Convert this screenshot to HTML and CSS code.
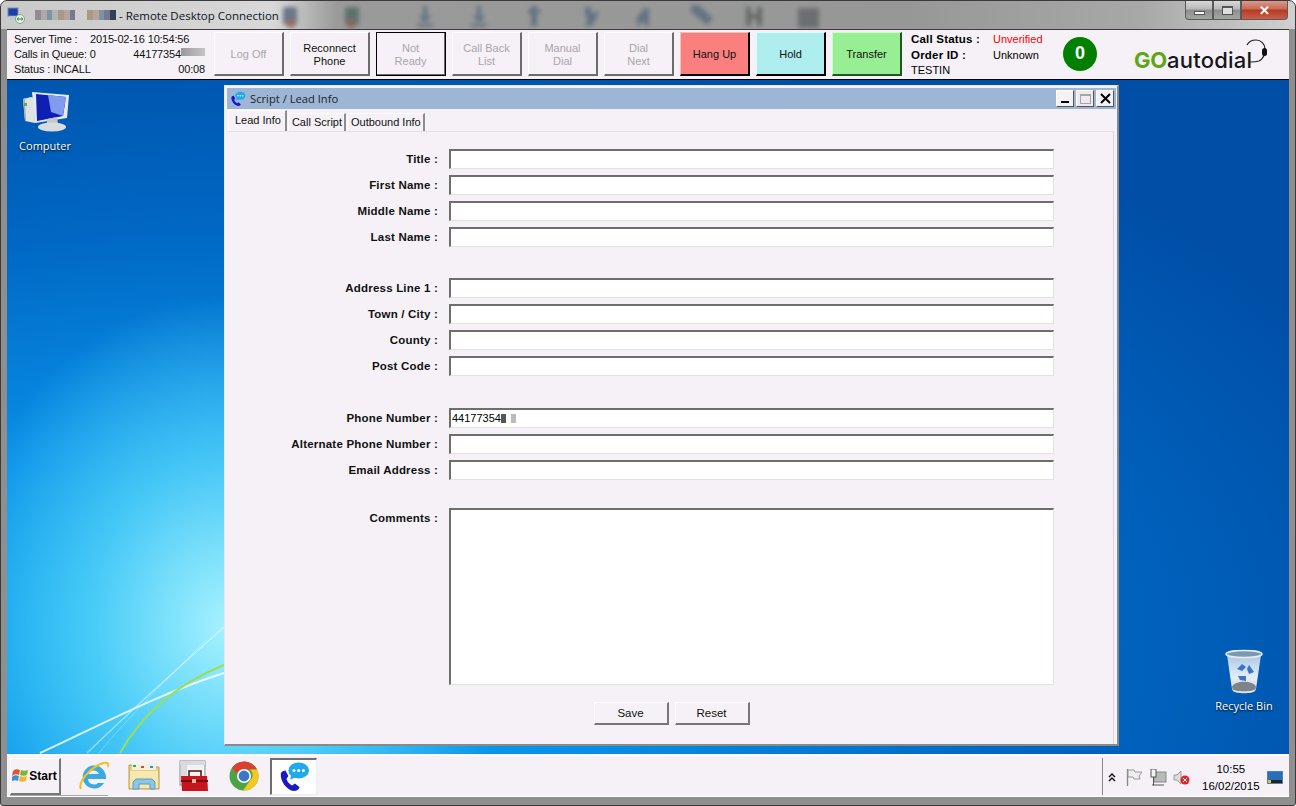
FILE: index.html
```html
<!DOCTYPE html>
<html lang="en">
<head>
    <meta charset="UTF-8">
    <title>Remote Desktop Connection</title>
    <link rel="stylesheet" href="styles.css">
</head>
<body>
    <div class="rdp">
        <div class="rdp-title">
            <svg class="rdp-icon" width="18" height="18" viewBox="0 0 18 18">
                <rect x="1" y="2" width="10" height="8" fill="#1c3fae" stroke="#7d8aa5"/>
                <rect x="3" y="10" width="7" height="3" fill="#b8c2d2"/>
                <circle cx="13" cy="13" r="4.5" fill="#e8efe6" stroke="#8aa08a"/>
                <path d="M10.5 13h5M12 11.5l-2 1.5 2 1.5M14 11.5l2 1.5-2 1.5" stroke="#2f9a3a" fill="none"/>
            </svg>
            <div class="blur-name">
                <i class="c1"></i><i class="c2"></i><i class="c3"></i><i class="c4"></i><i class="c5"></i><i class="c6"></i><i class="c7"></i><i class="c0"></i><i class="c0"></i><i class="c5"></i><i class="c6"></i><i class="c3"></i><i class="c7"></i><i class="c8"></i>
            </div>
            <span class="rdp-title-text">- Remote Desktop Connection</span>
            <div class="blur-tools">
                <svg width="560" height="29" viewBox="0 0 560 29">
                    <g fill="#586a7d">
                        <rect x="2" y="6" width="14" height="18" rx="3" fill="#53647a"/>
                        <circle cx="10" cy="22" r="5" fill="#8a5a55"/>
                        <rect x="64" y="6" width="14" height="18" rx="3" fill="#4c6a60"/>
                        <circle cx="70" cy="22" r="5" fill="#7d5c55"/>
                        <path d="M142 5h4v10h5l-7 7-7-7h5zM136 23h16v3h-16z"/>
                        <path d="M196 5h4v10h5l-7 7-7-7h5zM190 23h16v3h-16z"/>
                        <path d="M253 4l8 8h-5v13h-6v-13h-5z"/>
                        <path d="M304 6h6v6l8-2-4 10-4 5h-6l3-8-3-2z"/>
                        <path d="M356 16l9-10 3 3v16h-4v-5l-8 5z"/>
                        <path d="M410 5l7-1 15 13-6 7-16-13z"/>
                        <path d="M465 6h5v7h6V6h5v19h-5v-7h-6v7h-5z" fill="#5d6060"/>
                        <rect x="517" y="7" width="21" height="20" fill="#626566"/>
                    </g>
                </svg>
            </div>
            <div class="rdp-controls">
                <button class="ctl"><span class="glyph-min"></span></button>
                <button class="ctl"><span class="glyph-max"></span></button>
                <button class="ctl ctl-close">&#10005;</button>
            </div>
        </div>

        <div class="screen">
            <div class="toolbar">
                <div class="info">
                    <div class="info-row"><span class="info-label">Server Time :</span><span>2015-02-16 10:54:56</span></div>
                    <div class="info-row"><span>Calls in Queue: 0</span><span class="info-phone">44177354<i class="smudge"></i></span></div>
                    <div class="info-row"><span>Status : INCALL</span><span>00:08</span></div>
                </div>
                <div class="buttons">
                    <button class="btn" disabled>Log Off</button>
                    <button class="btn btn-wide">Reconnect<br>Phone</button>
                    <button class="btn btn-focus" disabled>Not<br>Ready</button>
                    <button class="btn" disabled>Call Back<br>List</button>
                    <button class="btn" disabled>Manual<br>Dial</button>
                    <button class="btn" disabled>Dial<br>Next</button>
                    <button class="btn btn-red">Hang Up</button>
                    <button class="btn btn-cyan">Hold</button>
                    <button class="btn btn-green">Transfer</button>
                </div>
                <div class="status">
                    <b>Call Status :</b><span class="red">Unverified</span>
                    <b>Order ID :</b><span>Unknown</span>
                    <span>TESTIN</span>
                </div>
                <div class="counter">0</div>
                <div class="logo">
                    <span class="logo-go">GO</span><span class="logo-auto">autodial</span>
                    <svg class="logo-head" width="24" height="26" viewBox="0 0 24 26">
                        <path d="M2 6C4 2 8 1 11 1c5 0 9 4 9 9 0 5-2 10-6 12-3 1-6 1-9 1" fill="none" stroke="#222" stroke-width="1.200"/>
                        <rect x="17" y="9" width="5" height="8" rx="2.500" fill="#111"/>
                    </svg>
                </div>
            </div>

            <div class="desktop">
                <svg class="streaks" width="230" height="200" viewBox="0 0 230 200">
                    <path d="M33 199C80 178 150 140 217 119" fill="none" stroke="#fff" stroke-width="2" opacity=".8"/>
                    <path d="M80 199C110 170 170 115 217 73" fill="none" stroke="#e8fbff" stroke-width="1.200" opacity=".55"/>
                    <path d="M92 199C115 170 165 120 200 85" fill="none" stroke="#e8fbff" stroke-width="1" opacity=".3"/>
                    <path d="M113 199C135 160 170 130 217 111" fill="none" stroke="#9ade5a" stroke-width="2"/>
                </svg>
                <div class="desk-icon desk-computer">
                    <svg class="computer-art" width="55" height="50" viewBox="0 0 55 50">
                        <path d="M3 14l8-2 3 1 1 25-10-2z" fill="#dfe3e4"/>
                        <path d="M3 14l2-1 1 23-1 0z" fill="#aab0b3"/>
                        <rect x="4" y="18" width="3" height="3" fill="#58b04a"/>
                        <path d="M12 7l37 3-2 23-32 5z" fill="#e6eaee"/>
                        <path d="M16 9l30 3-3 19-26 5z" fill="#0f1fb4"/>
                        <path d="M28 10l18 2-3 19-12-4z" fill="#7f9cf0"/>
                        <path d="M27 34l10-2 1 7H27z" fill="#c3c8cb"/>
                        <ellipse cx="32" cy="42" rx="14" ry="4.5" fill="#d9dcde"/>
                    </svg>
                    <span>Computer</span>
                </div>
                <div class="desk-icon desk-bin">
                    <svg width="40" height="48" viewBox="0 0 40 48">
                        <defs>
                            <linearGradient id="binGlass" x1="0" y1="0" x2="0" y2="1">
                                <stop offset="0" stop-color="#a9c8e6"/>
                                <stop offset=".6" stop-color="#e3eef6"/>
                                <stop offset="1" stop-color="#cfd6da"/>
                            </linearGradient>
                        </defs>
                        <path d="M3 7l5 34c1 4 23 4 24 0l5-34c-3 4-31 4-34 0z" fill="url(#binGlass)"/>
                        <ellipse cx="20" cy="6" rx="18" ry="3.5" fill="#7b98b2" stroke="#e9eef2" stroke-width="1.5"/>
                        <path d="M8 39c2-7 22-7 24 0l-1 3c-2 4-20 4-22 0z" fill="#7e8488"/>
                        <path d="M8 41c3 3 21 3 24 0l-1 2c-2 3-20 3-22 0z" fill="#dfe2e4"/>
                        <path d="M13 21l5-5 4 3-4 4zM25 17l5 7-5 2-2-5zM14 28l8 0 0 5-6-1z" fill="#3a74c9"/>
                    </svg>
                    <span>Recycle Bin</span>
                </div>

                <div class="win">
                    <div class="win-title">
                        <svg class="phone-icon" width="16" height="16" viewBox="0 0 34 34">
                            <path d="M3 13c1-2 3-3 5-3l3 6-2 3c1 3 3 5 6 7l3-2 5 4c-1 3-4 4-6 4C9 31 2 21 3 13z" fill="#1a1ac4"/>
                            <ellipse cx="22" cy="10" rx="11" ry="8.5" fill="#1fa9ee"/>
                            <path d="M14 15l-1 5 6-3z" fill="#1fa9ee"/>
                            <circle cx="17" cy="10" r="1.6" fill="#fff"/><circle cx="22" cy="10" r="1.6" fill="#fff"/><circle cx="27" cy="10" r="1.6" fill="#fff"/>
                        </svg>
                        <span class="win-title-text">Script / Lead Info</span>
                        <div class="win-ctls">
                            <button class="wbtn"><span class="wmin"></span></button>
                            <button class="wbtn wbtn-off"><span class="wmax"></span></button>
                            <button class="wbtn"><svg width="11" height="11" viewBox="0 0 11 11"><path d="M1 1l9 9M10 1l-9 9" stroke="#000" stroke-width="2"/></svg></button>
                        </div>
                    </div>
                    <div class="tabs">
                        <span class="tab tab-on">Lead Info</span>
                        <span class="tab">Call Script</span>
                        <span class="tab">Outbound Info</span>
                    </div>
                    <div class="panel">
                        <div class="group">
                            <label>Title :</label><input type="text">
                            <label>First Name :</label><input type="text">
                            <label>Middle Name :</label><input type="text">
                            <label>Last Name :</label><input type="text">
                        </div>
                        <div class="group group-address">
                            <label>Address Line 1 :</label><input type="text">
                            <label>Town / City :</label><input type="text">
                            <label>County :</label><input type="text">
                            <label>Post Code :</label><input type="text">
                        </div>
                        <div class="group group-phone">
                            <label>Phone Number :</label><div class="field">44177354<i class="smudge-a"></i><i class="smudge-b"></i></div>
                            <label>Alternate Phone Number :</label><input type="text">
                            <label>Email Address :</label><input type="text">
                        </div>
                        <div class="group group-comments">
                            <label>Comments :</label><textarea></textarea>
                        </div>
                        <div class="actions">
                            <button class="act">Save</button>
                            <button class="act">Reset</button>
                        </div>
                    </div>
                </div>
            </div>

            <div class="taskbar">
                <button class="start">
                    <svg width="17" height="15" viewBox="0 0 17 15">
                        <path d="M1 3c2-2 4-2 7-1l-1 5c-2-1-5-1-7 1z" fill="#e4572e"/>
                        <path d="M9 2c2 1 5 1 7 0l-1 5c-2 1-5 1-7 0z" fill="#7fb33a"/>
                        <path d="M0 9c2-2 4-2 7-1l-1 5c-2-1-5-1-7 1z" fill="#3f8fd8"/>
                        <path d="M8 8c2 1 5 1 7 0l-1 5c-2 1-5 1-7 0z" fill="#f2b632"/>
                    </svg>
                    <b>Start</b>
                </button>
                <div class="apps">
                    <div class="app">
                        <svg width="32" height="32" viewBox="0 0 32 32">
                            <path d="M27 13a11.500 11.500 0 1 0-1 10h-6a6 6 0 0 1-10-4h18c0-2 0-4-1-6zM10 14a6 6 0 0 1 11 0z" fill="#3aa9e4"/>
                            <path d="M3 29C0 24 9 9 25 3c4-1 6 0 5 4" fill="none" stroke="#f2c21b" stroke-width="2"/>
                        </svg>
                    </div>
                    <div class="app">
                        <svg width="32" height="30" viewBox="0 0 32 30">
                            <path d="M1 4h12l2 2h16v22H1z" fill="#e9cf7d" stroke="#b99c52"/>
                            <rect x="4" y="3" width="24" height="6" fill="#f4f0e0"/>
                            <rect x="5" y="4" width="3" height="2" fill="#2fb344"/><rect x="13" y="5" width="3" height="2" fill="#d9452f"/><rect x="22" y="5" width="3" height="2" fill="#2f8fe0"/>
                            <rect x="2" y="10" width="28" height="17" fill="#f8e8ae"/>
                            <path d="M5 28v-7l3-3h16l3 3v7h-5v-5H11v5z" fill="#8cc6e6" stroke="#5b9cc4"/>
                        </svg>
                    </div>
                    <div class="app">
                        <svg width="30" height="32" viewBox="0 0 30 32">
                            <rect x="1" y="1" width="25" height="24" fill="#f2f2f2" stroke="#8d8d96"/>
                            <rect x="1" y="1" width="25" height="4" fill="#d8dae0"/>
                            <rect x="2" y="5" width="6" height="16" fill="#dcdcdc"/>
                            <path d="M10 16v-5h12v5" fill="none" stroke="#4d1010" stroke-width="1.5"/>
                            <path d="M2 16h26l1 15H3z" fill="#c4161c"/>
                            <rect x="2" y="20" width="27" height="2" fill="#7d0a0f"/>
                            <rect x="13" y="19" width="4" height="4" fill="#e7b9a0"/>
                        </svg>
                    </div>
                    <div class="app">
                        <svg width="30" height="30" viewBox="0 0 30 30">
                            <circle cx="15" cy="15" r="14.500" fill="#4ea246"/>
                            <path d="M3 7A14.500 14.500 0 0 1 28 8.500H15a7 7 0 0 0-7 4z" fill="#dc3e2f"/>
                            <path d="M28 8.500A14.500 14.500 0 0 1 14 29.500l7-10a7 7 0 0 0 0-11z" fill="#f4c91f"/>
                            <circle cx="15" cy="15" r="7" fill="#fff"/>
                            <circle cx="15" cy="15" r="5.400" fill="#3b78c4"/>
                        </svg>
                    </div>
                    <div class="app app-on">
                        <svg width="34" height="32" viewBox="0 0 34 34">
                            <path d="M3 13c1-2 3-3 5-3l3 6-2 3c1 3 3 5 6 7l3-2 5 4c-1 3-4 4-6 4C9 31 2 21 3 13z" fill="#1a1ac4"/>
                            <ellipse cx="22" cy="10" rx="11" ry="8.500" fill="#1fa9ee"/>
                            <path d="M14 15l-1 5 6-3z" fill="#1fa9ee"/>
                            <circle cx="17" cy="10" r="1.600" fill="#fff"/><circle cx="22" cy="10" r="1.600" fill="#fff"/><circle cx="27" cy="10" r="1.600" fill="#fff"/>
                        </svg>
                    </div>
                </div>
                <div class="tray">
                    <svg class="tray-up" width="8" height="10" viewBox="0 0 8 10"><path d="M1 4l3-3 3 3M1 8l3-3 3 3" fill="none" stroke="#000" stroke-width="1.4"/></svg>
                    <svg width="18" height="17" viewBox="0 0 18 17"><path d="M2.500 0v17" stroke="#888" stroke-width="1.400"/><path d="M3 1h6l1 2h7l-3 4 1 3H9L8 8H3z" fill="#eee" stroke="#999"/></svg>
                    <svg width="18" height="17" viewBox="0 0 18 17"><rect x="5" y="3" width="12" height="10" fill="#b9b9b9" stroke="#888"/><rect x="2" y="0" width="5" height="8" fill="#f3f3f3" stroke="#555"/><path d="M4.500 8v8M3 16h12" stroke="#555"/></svg>
                    <svg width="18" height="15" viewBox="0 0 18 15"><path d="M1 5h3l4-4v13l-4-4H1z" fill="#ddd" stroke="#999"/><circle cx="12" cy="10" r="4.500" fill="#e3242b"/><path d="M10 8l4 4M14 8l-4 4" stroke="#fff"/></svg>
                    <div class="clock"><span>10:55</span><span>16/02/2015</span></div>
                    <svg class="tray-screen" width="16" height="13" viewBox="0 0 16 13"><rect width="16" height="13" fill="#2a6fb5" stroke="#6f93b8"/><rect x="4" y="9" width="11" height="3" fill="#222"/><rect x="1" y="9" width="3" height="3" fill="#e8c12a"/></svg>
                </div>
            </div>
        </div>
    </div>
</body>
</html>
```

FILE: styles.css
```css
* { box-sizing: border-box; }
html, body { margin: 0; padding: 0; height: 100%; }
body {
    background: #fff;
    font-family: "Liberation Sans", Arial, sans-serif;
    font-size: 12px;
    color: #000;
    overflow: hidden;
}
button { font-family: inherit; }

/* outer remote desktop window */
.rdp {
    width: 1296px;
    height: 806px;
    display: flex;
    flex-direction: column;
    padding: 0 6px 8px;
    background: #8f8f8f;
    border: 1px solid #3a3a3a;
    border-radius: 7px 7px 3px 3px;
}
.rdp-title {
    height: 28px;
    flex: none;
    display: flex;
    align-items: center;
    position: relative;
    background: linear-gradient(90deg, #c9c9c9 0, #d8d8d8 21%, #9a9a9a 26%, #979797 70%, #a8a8a8 88%, #d0d0d0 100%);
    margin: 0 -6px;
    padding-left: 6px;
    border-radius: 6px 6px 0 0;
}
.rdp-icon { flex: none; margin-right: 10px; }
.blur-name { display: flex; width: 81px; margin-right: 3px; height: 10px; }
.blur-name i { flex: 1; }
.c0 { background: #cfcfcf; }
.c1 { background: #8f8c92; }
.c2 { background: #b3a6a8; }
.c3 { background: #7d95a2; }
.c4 { background: #b0b5b4; }
.c5 { background: #a89a85; }
.c6 { background: #b3a59c; }
.c7 { background: #76788f; }
.c8 { background: #34405a; }
.rdp-title-text { font-family: "Open Sans", sans-serif; font-size: 11.5px; color: #0d1420; position: relative; z-index: 1; }
.blur-tools {
    position: absolute;
    left: 280px;
    top: 0;
    filter: blur(2px);
    opacity: .8;
}
.rdp-controls { position: absolute; right: 7px; top: 0; display: flex; }
.ctl {
    width: 28px;
    height: 19px;
    border: 1px solid #5a5a5a;
    border-top: 0;
    padding: 0;
    background: linear-gradient(#d8d8d8, #b8b8b8 45%, #8d8d8d 50%, #a5a5a5);
    display: flex;
    align-items: center;
    justify-content: center;
}
.ctl:first-child { border-radius: 0 0 0 4px; }
.ctl-close {
    width: 47px;
    background: linear-gradient(#d99a8c, #c66a55 45%, #b53a22 50%, #c9604a);
    border-radius: 0 0 4px 0;
    color: #fff;
    font-size: 13px;
    font-weight: bold;
}
.glyph-min { display: block; width: 11px; height: 4px; margin-top: 5px; background: #fff; border: 1px solid #555; }
.glyph-max { display: block; width: 11px; height: 9px; background: #ddd; border: 1px solid #555; border-top-width: 2px; }

.screen {
    flex: 1;
    display: flex;
    flex-direction: column;
    border-top: 1px solid #3a3a3a;
}

/* agent toolbar */
.toolbar {
    height: 50px;
    flex: none;
    display: flex;
    background: #f5f1f6;
    border-bottom: 1px solid #000;
    position: relative;
}
.info {
    width: 198px;
    flex: none;
    padding: 2px 0 0 7px;
    line-height: 15px;
    font-size: 11px;
    letter-spacing: -.15px;
    color: #111;
}
.info-row { display: flex; justify-content: space-between; }
.info-label { width: 76px; }
.info-row:first-child { justify-content: flex-start; }
.smudge { display: inline-block; width: 24px; height: 8px; background: linear-gradient(90deg, #999, #c5c5c5); vertical-align: 2px; }
.buttons { display: flex; gap: 6px; padding-top: 2px; margin-left: 9px; }
.btn {
    width: 70px;
    height: 44px;
    padding: 2px 0 0;
    font-size: 11px;
    line-height: 13px;
    color: #111;
    background: #f5f1f6;
    border: 1px solid;
    border-color: #fff #6c6c6c #6c6c6c #fff;
    border-width: 1px 2px 2px 1px;
}
.btn-wide { width: 80px; }
.btn:disabled { color: #a9a6aa; }
.btn-focus { outline: 1px solid #000; outline-offset: -1px; }
.btn-red { background: #fa8080; border-color: #fbb #000 #000 #fbb; }
.btn-cyan { background: #aeeeee; border-color: #dff #000 #000 #dff; }
.btn-green { background: #98ee92; border-color: #cfc #225522 #225522 #cfc; }
.status {
    margin-left: 9px;
    width: 146px;
    flex: none;
    display: grid;
    grid-template-columns: 82px 1fr;
    padding-top: 2px;
    line-height: 15px;
    font-size: 11px;
}
.status b { font-size: 11.5px; letter-spacing: .2px; }
.red { color: #f00; }
.counter {
    width: 34px;
    height: 34px;
    margin: 7px 0 0 6px;
    border-radius: 50%;
    background: #008000;
    color: #fff;
    font-size: 18px;
    font-weight: bold;
    text-align: center;
    line-height: 32px;
    flex: none;
}
.logo {
    position: absolute;
    left: 1127px;
    top: 15px;
    display: flex;
    font-family: Inter, sans-serif;
    font-size: 22px;
    line-height: 30px;
}
.logo-go { color: #5ea51b; font-weight: 700; letter-spacing: -.2px; }
.logo-auto { color: #16161a; font-weight: 500; letter-spacing: .2px; }
.logo-head { position: absolute; left: 111px; top: -6px; }

/* wallpaper and icons */
.desktop {
    flex: 1;
    position: relative;
    overflow: hidden;
    background:
        radial-gradient(ellipse 280px 330px at 223px 545px, #a8f2ff 0, rgba(90, 215, 250, .75) 50%, rgba(60, 200, 250, 0) 100%),
        radial-gradient(ellipse 1250px 640px at 223px 560px, #10b0f2 0, #0890e8 32%, #0068c4 64%, #004ea6 100%);
}
.streaks { position: absolute; left: 0; bottom: 0; }
.desk-icon {
    position: absolute;
    display: flex;
    flex-direction: column;
    align-items: center;
    color: #fff;
    font-family: "Open Sans", sans-serif;
    font-size: 11px;
    line-height: 16px;
    text-shadow: 0 1px 2px #000;
}
.desk-computer { left: 10px; top: 5px; width: 56px; }
.computer-art { margin-left: 5px; }
.desk-computer span { margin-top: 3px; }
.desk-bin { left: 1202px; top: 568px; width: 70px; }
.desk-bin span { margin-top: 2px; }

/* script window */
.win {
    position: absolute;
    left: 217px;
    top: 5px;
    width: 895px;
    height: 661px;
    display: flex;
    flex-direction: column;
    padding: 2px 3px 0;
    background: #f5f1f6;
    border: solid #8a8a8a;
    border-width: 1px 2px 2px 1px;
    border-color: #e8e8e8 #8a8a8a #8a8a8a #e8e8e8;
}
.win-title {
    height: 21px;
    flex: none;
    display: flex;
    align-items: center;
    padding-left: 3px;
    margin: 0 -2px 0 -1px;
    background: #9db6d5;
}
.phone-icon { margin-right: 4px; }
.win-title-text { font-family: "Open Sans", sans-serif; font-size: 11.2px; color: #222; }
.win-ctls { margin-left: auto; display: flex; gap: 2px; padding-right: 2px; }
.wbtn {
    width: 18px;
    height: 17px;
    padding: 0;
    display: flex;
    align-items: center;
    justify-content: center;
    background: #f5f1f6;
    border: 1px solid;
    border-color: #fff #555 #555 #fff;
}
.wmin { display: block; width: 8px; height: 2px; background: #000; margin-top: 7px; }
.wmax { display: block; width: 11px; height: 10px; border: 1px solid #a5a5a5; border-top-width: 2px; }
.wbtn-off { background: #eeeaef; }
.tabs { height: 22px; flex: none; display: flex; align-items: flex-end; gap: 1px; }
.tab {
    height: 18px;
    padding: 0 2px 0 3px;
    font-size: 11px;
    line-height: 17px;
    color: #111;
    border: solid #8d8d8d;
    border-width: 1px 2px 0 1px;
    border-color: #fff #8d8d8d #8d8d8d #fff;
}
.tab-on { height: 21px; padding: 0 4px 0 6px; line-height: 18px; }
.panel {
    flex: 1;
    display: flex;
    flex-direction: column;
    padding-top: 17px;
    border-top: 1px solid #e3e1e4;
    border-right: 1px solid #d8d6d8;
}
.group {
    display: grid;
    grid-template-columns: 210px 605px;
    column-gap: 11px;
    row-gap: 6px;
    align-items: center;
}
.group label {
    text-align: right;
    font-weight: bold;
    font-size: 11.5px;
    letter-spacing: .2px;
    color: #111;
}
.group-address { margin-top: 31px; }
.group-phone { margin-top: 32px; }
input, .field, textarea {
    height: 20px;
    border: 1px solid #e2e2e2;
    border-top: 2px solid #6e6e6e;
    border-left: 2px solid #6e6e6e;
    background: #fff;
    padding: 0 0 0 1px;
    font-size: 11px;
    font-family: inherit;
    line-height: 17px;
    display: block;
}
.smudge-a { display: inline-block; width: 5px; height: 9px; background: #555; vertical-align: -1px; }
.smudge-b { display: inline-block; width: 5px; height: 9px; background: #bbb; margin-left: 5px; vertical-align: -1px; }
.group-comments { align-items: start; margin-top: 28px; }
.group-comments label { margin-top: 4px; }
textarea { height: 177px; resize: none; }
.actions { display: flex; justify-content: center; gap: 6px; margin-top: 17px; padding-left: 2px; }
.act {
    width: 75px;
    height: 23px;
    padding: 0;
    font-size: 11.5px;
    background: #f5f1f6;
    border: solid;
    border-width: 1px 2px 2px 1px;
    border-color: #fff #777 #777 #fff;
    color: #111;
}

/* taskbar */
.taskbar {
    height: 43px;
    flex: none;
    display: flex;
    align-items: center;
    position: relative;
    background: #f5f1f6;
    border-top: 2px solid #fff;
    border-bottom: 1px solid #fff;
}
.taskbar::after {
    content: "";
    position: absolute;
    left: 3px;
    bottom: 0;
    width: 98px;
    height: 1px;
    background: #a8a8a8;
}
.start {
    width: 51px;
    height: 37px;
    margin-left: 3px;
    padding: 0 1px 0 0;
    display: flex;
    align-items: center;
    justify-content: center;
    background: #f5f1f6;
    border: solid;
    border-width: 1px 2px 2px 1px;
    border-color: #fff #777 #777 #fff;
    font-size: 12px;
}
.apps { display: flex; margin-left: 8px; }
.app { width: 50px; height: 37px; display: flex; align-items: center; justify-content: center; }
.app-on {
    width: 47px;
    margin-left: 1px;
    background: #fff;
    border: solid;
    border-width: 2px 1px 1px 2px;
    border-color: #6e6e6e #eee #eee #6e6e6e;
}
.tray {
    margin-left: auto;
    height: 37px;
    width: 187px;
    display: flex;
    align-items: center;
    gap: 6px;
    padding: 3px 5px 0;
    border-left: 1px solid #888;
}
.tray-up { margin-right: 3px; }
.clock {
    display: flex;
    flex-direction: column;
    align-items: center;
    line-height: 17px;
    font-size: 11.5px;
    margin: 0 1px 0 5px;
}
```
